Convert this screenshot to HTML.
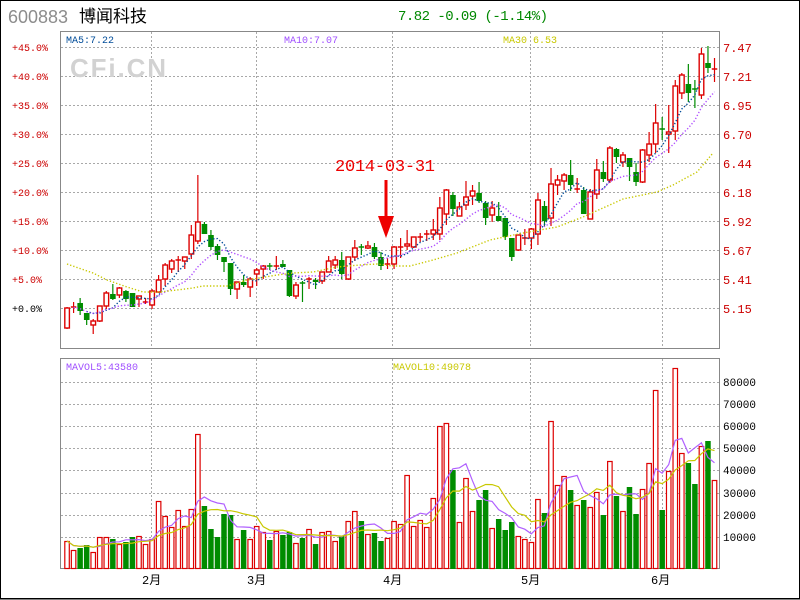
<!DOCTYPE html>
<html><head><meta charset="utf-8">
<style>
html,body{margin:0;padding:0;background:#fff;}
body{width:800px;height:600px;overflow:hidden;}
svg{display:block;}
text{font-family:"Liberation Mono","Noto Sans CJK SC",monospace;}
</style></head><body>
<svg id="s" width="800" height="600" xmlns="http://www.w3.org/2000/svg">
<rect x="0.5" y="0.5" width="799" height="598" fill="#fff" stroke="#000" stroke-width="1"/>
<line x1="0" y1="599" x2="800" y2="599" stroke="#000"/>
<text x="8" y="23" font-family="Liberation Sans, sans-serif" font-size="18" fill="#8c8c8c" style="font-family:'Liberation Sans',sans-serif">600883</text>
<text x="79" y="22" font-size="17" fill="#000" style="font-family:'Liberation Sans','Noto Sans CJK SC',sans-serif">博闻科技</text>
<text x="398" y="20" font-size="14" fill="#008800" textLength="150">7.82 -0.09 (-1.14%)</text>
<g id="grid" stroke="#a8a8a8" stroke-dasharray="2,2" stroke-width="1"></g>
<text x="70" y="77" font-size="26" font-weight="bold" fill="#d2d2d2" style="font-family:'Liberation Sans',sans-serif" textLength="96">CFi.CN</text>
<rect x="60.5" y="31.5" width="659" height="317" fill="none" stroke="#888"/>
<rect x="60.5" y="358.5" width="659" height="210" fill="none" stroke="#888"/>
<text x="66" y="43" font-size="10" fill="#004c99">MA5:7.22</text>
<text x="284" y="43" font-size="10" fill="#a050ff">MA10:7.07</text>
<text x="503" y="43" font-size="10" fill="#c8c800">MA30 6.53</text>
<text x="66" y="370" font-size="10" fill="#a050ff">MAVOL5:43580</text>
<text x="393" y="370" font-size="10" fill="#c8c800">MAVOL10:49078</text>
<g font-size="10" fill="#cc0000">
<text x="12" y="51">+45.0%</text><text x="12" y="80">+40.0%</text><text x="12" y="109">+35.0%</text>
<text x="12" y="138">+30.0%</text><text x="12" y="167">+25.0%</text><text x="12" y="196">+20.0%</text>
<text x="12" y="225">+15.0%</text><text x="12" y="254">+10.0%</text><text x="12" y="283">+5.0%</text>
<text x="12" y="312" fill="#000">+0.0%</text>
</g>
<g font-size="12" fill="#cc0000">
<text x="723" y="52">7.47</text><text x="723" y="81">7.21</text><text x="723" y="110">6.95</text>
<text x="723" y="139">6.70</text><text x="723" y="168">6.44</text><text x="723" y="197">6.18</text>
<text x="723" y="226">5.92</text><text x="723" y="255">5.67</text><text x="723" y="284">5.41</text>
<text x="723" y="313">5.15</text>
</g>
<g font-size="11" fill="#000" style="font-family:'Liberation Sans',sans-serif">
<text x="723" y="386">80000</text><text x="723" y="408">70000</text><text x="723" y="430">60000</text>
<text x="723" y="452">50000</text><text x="723" y="474">40000</text><text x="723" y="497">30000</text>
<text x="723" y="519">20000</text><text x="723" y="541">10000</text>
</g>
<g font-size="12" fill="#000" style="font-family:'Liberation Sans','Noto Sans CJK SC',sans-serif">
<text x="142" y="584">2月</text><text x="247" y="584">3月</text><text x="383" y="584">4月</text>
<text x="521" y="584">5月</text><text x="651" y="584">6月</text>
</g>
<text x="335" y="171" font-size="17" fill="#ee0000" textLength="100">2014-03-31</text>
<line x1="386" y1="180" x2="386" y2="228" stroke="#ee0000" stroke-width="3"/>
<polygon points="378,216 394,216 386,238" fill="#ee0000"/>
<g id="vol"></g><g id="cdl"></g><g id="ma"></g>
</svg>
<script>
var NS="http://www.w3.org/2000/svg";
function el(p,t,a){var e=document.createElementNS(NS,t);for(var k in a)e.setAttribute(k,a[k]);document.getElementById(p).appendChild(e);return e;}
var gy=[47,76,105,134,163,192,221,250,279,308];
gy.forEach(function(y){el("grid","line",{x1:61,x2:719,y1:y+.5,y2:y+.5});});
[382,404,426,448,470,493,515,537].forEach(function(y){el("grid","line",{x1:61,x2:719,y1:y+.5,y2:y+.5});});
[151,256,392,530,662].forEach(function(x){el("grid","line",{x1:x+.5,x2:x+.5,y1:32,y2:348});el("grid","line",{x1:x+.5,x2:x+.5,y1:359,y2:568});});
var V="541r550r548g545g552r537r537r539g544r542g537g536r544r539r501r516r527r510r526r509r434r506g529g537g514g515g539r530g539r526r532r540g531r535g532g543r538g529r544g532r531r541r536g521r511r521g534r533g541g538r521r524r475r526r520r527r498r426r423r470g522r478r511r500g490g528r519g530g522g536r539r542r499r513g421r485r476r490g505r500g507r492r515g461r496g511r487g514g489r463r390r510g471r368r453r463g484g446r441g480r";
var vols=[],vc=[];V.replace(/(\d+)([rg])/g,function(m,a,b){vols.push(+a);vc.push(b);});
function X(i){return 64.3+6.54*i;}
vols.forEach(function(t,i){var x=X(i);
 if(vc[i]=="r")el("vol","rect",{x:x+.5,y:t+.5,width:4.5,height:568-t,fill:"#fff",stroke:"#dd0000","stroke-width":1.2});
 else el("vol","rect",{x:x,y:t,width:5.5,height:569-t,fill:"#008c00"});});
function ma(a,n){return a.map(function(v,i){var s=0,c=0;for(var j=Math.max(0,i-n+1);j<=i;j++){s+=a[j];c++;}return s/c;});}
function pl(arr,col,dash,w,start){var p=[];arr.forEach(function(v,i){if(i>=start)p.push((X(i)+2.7).toFixed(1)+","+v.toFixed(1));});
 var a={points:p.join(" "),fill:"none",stroke:col,"stroke-width":w};if(dash)a["stroke-dasharray"]=dash;el("ma","polyline",a);}
pl(ma(vols,5),"#b060ff",null,1.2,0);pl(ma(vols,10),"#c8c800",null,1.2,0);
// candles: color, bodyTop, bodyBot, high, low
var C=[["r",308,328,307,329],["r",307,307,302,313],["g",303,311,298,315],["g",313,320,313,325],["r",321,325,319,334],["r",306,321,306,322],["r",293,306,291,309],["g",294,299,284,300],["r",288,295,287,298],["g",291,299,290,302],
["g",293,307,293,307],["r",296,299,296,307],["r",302,302,298,304],["r",291,305,289,309],["r",280,292,275,293],["r",265,279,263,286],["r",261,269,259,273],["r",260,261,256,272],["r",257,261,257,269],["r",235,254,225,259],
["r",222,241,175,244],["g",224,234,222,234],["g",235,247,230,250],["g",246,255,244,260],["g",257,262,257,272],["g",263,289,263,295],["r",282,289,282,299],["g",282,285,275,287],["r",279,287,277,297],["r",270,274,268,286],
["r",266,269,265,279],["g",266,266,263,270],["r",266,266,256,270],["g",264,267,260,267],["g",270,296,270,297],["r",285,296,282,299],["g",283,283,281,302],["r",279,280,277,289],["g",280,282,278,289],["r",272,281,272,284],
["r",261,272,256,272],["r",260,265,256,269],["g",260,274,252,279],["r",257,279,257,280],["r",248,257,240,261],["g",247,247,244,255],["r",246,248,241,249],["g",247,257,243,259],["g",257,266,252,270],["r",264,265,258,269],
["r",247,264,246,269],["r",247,247,238,258],["r",244,246,230,250],["r",237,247,237,248],["r",237,237,233,242],["r",234,234,230,241],["r",230,234,219,240],["r",208,234,197,240],["r",190,214,189,225],["g",195,209,192,216],
["r",207,216,202,216],["r",197,205,181,210],["r",191,196,185,205],["g",193,201,182,203],["g",203,218,201,225],["r",208,215,201,222],["g",216,221,202,221],["g",218,237,218,240],["g",238,257,238,261],["r",235,250,235,251],
["r",238,238,229,245],["r",229,238,228,249],["r",200,234,193,245],["g",206,221,201,227],["r",184,218,168,226],["r",180,185,175,195],["r",175,181,173,190],["g",175,185,160,191],["r",189,189,178,193],["g",190,214,187,214],
["r",192,219,189,219],["r",170,194,159,199],["g",172,179,161,182],["r",148,180,146,183],["g",149,157,148,163],["r",155,162,152,167],["g",158,167,158,181],["g",172,182,163,186],["r",150,182,149,183],["r",144,155,132,162],
["r",123,144,104,153],["g",129,129,117,140],["r",132,134,105,153],["r",86,131,80,140],["r",75,93,73,99],["g",84,93,64,102],["g",89,89,80,108],["r",54,95,48,99],["g",63,68,46,73],["r",69,69,58,82]];
var closes=[];
C.forEach(function(c,i){var x=X(i),cx=x+2.75,col=c[0]=="r"?"#dd0000":"#008c00";
 closes.push(c[0]=="r"?c[1]:c[2]);
 el("cdl","line",{x1:cx,x2:cx,y1:c[3],y2:c[4],stroke:col,"stroke-width":1.2});
 var h=c[2]-c[1];
 if(h<1.5)el("cdl","line",{x1:x,x2:x+5.5,y1:c[1],y2:c[1],stroke:col,"stroke-width":1.5});
 else if(c[0]=="r")el("cdl","rect",{x:x+.5,y:c[1],width:4.6,height:h,fill:"#fff",stroke:col,"stroke-width":1.4});
 else el("cdl","rect",{x:x,y:c[1],width:5.6,height:h,fill:col});});
pl(ma(closes,5),"#004c99","1.3,2",1.4,3);
pl(ma(closes,10),"#b050ff","1.3,2",1.4,1);
el("ma","polyline",{points:"67,264 93,273 107,280 127,287 143,292 160,292 177,290 193,288 203,286 227,286 247,280 277,275 293,273 313,272 337,267 360,265 377,264 393,266 410,266 433,260 457,253 490,240 523,233 557,227 583,217 623,199 657,192 673,185 697,172 713,153",fill:"none",stroke:"#c8c800","stroke-width":1.4,"stroke-dasharray":"1.3,2"});
</script>
</body></html>
